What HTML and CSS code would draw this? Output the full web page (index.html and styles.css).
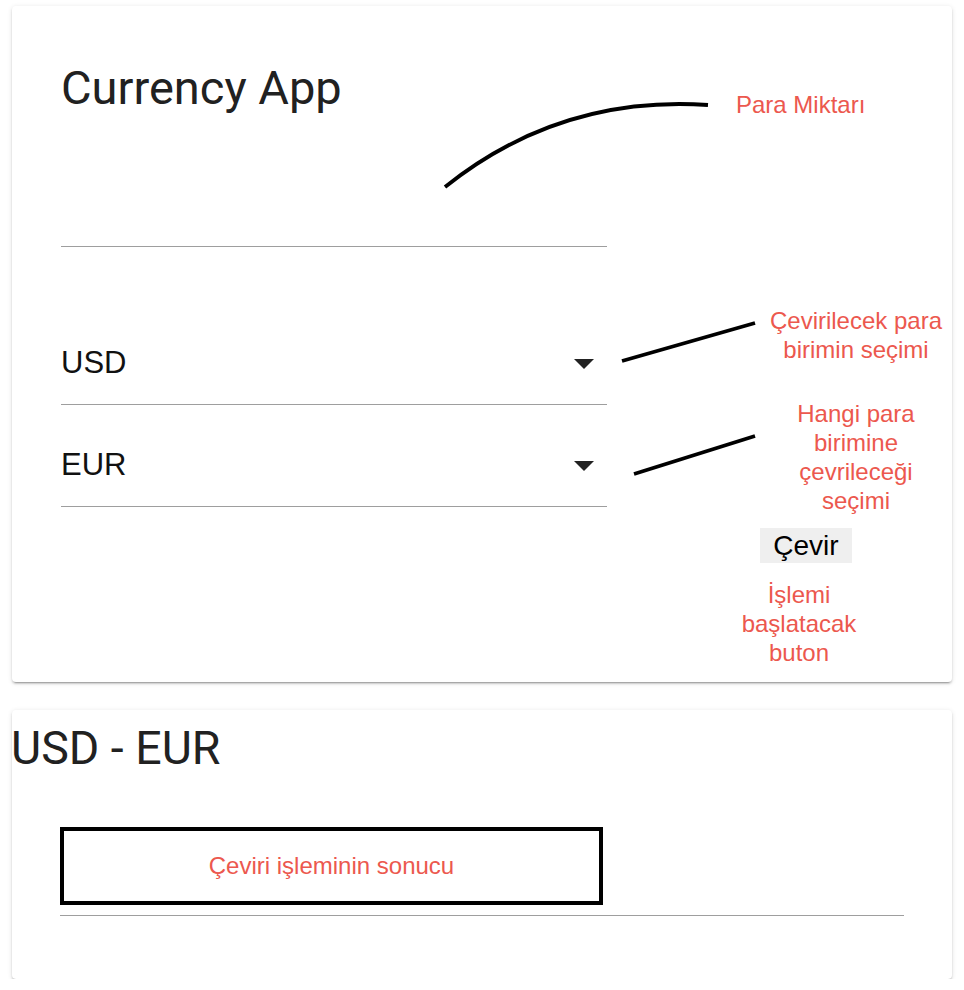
FILE: index.html
```html
<!DOCTYPE html>
<html lang="tr">
<head>
<meta charset="utf-8">
<title>Currency App</title>
<link rel="stylesheet" href="styles.css">
</head>
<body>
<main class="page">
  <section class="card card-form">
    <div class="form-col">
      <h1 class="app-title">Currency App</h1>
      <div class="field field-amount"></div>
      <div class="field field-select field-from">
        <span class="select-value">USD</span>
        <svg class="select-arrow" width="20" height="10" viewBox="0 0 20 10"><polygon points="0,0 20,0 10,10"/></svg>
      </div>
      <div class="field field-select field-to">
        <span class="select-value">EUR</span>
        <svg class="select-arrow" width="20" height="10" viewBox="0 0 20 10"><polygon points="0,0 20,0 10,10"/></svg>
      </div>
    </div>
    <div class="notes-col">
      <p class="note note-amount">Para Miktarı</p>
      <p class="note note-from">Çevirilecek para<br>birimin seçimi</p>
      <p class="note note-to">Hangi para<br>birimine<br>çevrileceği<br>seçimi</p>
      <button class="convert-btn" type="button">Çevir</button>
      <p class="note note-btn">İşlemi<br>başlatacak<br>buton</p>
    </div>
    <svg class="pointers" width="940" height="676" viewBox="0 0 940 676">
      <path d="M433 181 Q548 89 696 99" />
      <path d="M610 355 L743 317" />
      <path d="M622 468 L743 430" />
    </svg>
  </section>

  <section class="card card-result">
    <h2 class="pair-title">USD - EUR</h2>
    <div class="result-field">
      <div class="result-box">Çeviri işleminin sonucu</div>
    </div>
  </section>
</main>
</body>
</html>
```

FILE: styles.css
```css
* {
  box-sizing: border-box;
}

html, body {
  margin: 0;
  padding: 0;
  background: #ffffff;
}

body {
  font-family: "Liberation Sans", Arial, sans-serif;
  color: #000;
}

.page {
  display: flex;
  flex-direction: column;
  gap: 28px;
  padding: 6px 12px 0;
}

.card {
  position: relative;
  background: #fff;
  border-radius: 4px;
  box-shadow: 0 3px 1px -2px rgba(0,0,0,0.2),
              0 2px 2px 0 rgba(0,0,0,0.14),
              0 1px 5px 0 rgba(0,0,0,0.12);
}

/* ---------- form card ---------- */
.card-form {
  display: grid;
  grid-template-columns: 546px 192px;
  column-gap: 153px;
  align-items: start;
  padding: 54px 0 15.5px 49px;
}

.form-col {
  display: flex;
  flex-direction: column;
}

.app-title {
  margin: 0;
  font-family: Roboto, "Liberation Sans", sans-serif;
  font-weight: 400;
  font-size: 47px;
  line-height: 56px;
  color: #212121;
}

.field {
  border-bottom: 1px solid #9e9e9e;
}

.field-amount {
  height: 131px;
}

.field-select {
  display: flex;
  align-items: flex-end;
  justify-content: space-between;
  padding-bottom: 23px;
}

.field-from {
  height: 158px;
}

.field-to {
  height: 102px;
}

.select-value {
  font-size: 31px;
  line-height: 36px;
  color: #111;
}

.select-arrow {
  display: block;
  fill: #222;
  margin: 0 13px 12px 0;
}

.notes-col {
  display: flex;
  flex-direction: column;
  align-items: flex-start;
}

.note {
  margin: 0;
  font-size: 24px;
  line-height: 29px;
  color: #ec584e;
}

.note-amount {
  margin-top: 30px;
  margin-left: -24px;
  white-space: nowrap;
}

.note-from {
  align-self: stretch;
  text-align: center;
  margin-top: 187px;
  margin-right: -10px;
  margin-left: -10px;
}

.note-to {
  align-self: stretch;
  text-align: center;
  margin-top: 35px;
}

.convert-btn {
  margin-top: 13px;
  width: 92px;
  height: 35px;
  padding: 0;
  border: 0;
  border-radius: 0;
  background: #efefef;
  font-family: "Liberation Sans", Arial, sans-serif;
  font-size: 28px;
  line-height: 35px;
  color: #000;
  text-align: center;
}

.note-btn {
  margin-top: 16.5px;
  margin-left: -21px;
  width: 120px;
  text-align: center;
}

.pointers {
  position: absolute;
  left: 0;
  top: 0;
  pointer-events: none;
  fill: none;
  stroke: #000;
  stroke-width: 3.8;
}

/* ---------- result card ---------- */
.card-result {
  padding: 10px 0 63px;
}

.pair-title {
  margin: 0 0 0 -1px;
  font-family: Roboto, "Liberation Sans", sans-serif;
  font-weight: 400;
  font-size: 46.5px;
  line-height: 56px;
  color: #212121;
}

.result-field {
  margin: 51px 48px 0;
  padding-bottom: 10px;
  border-bottom: 1px solid #9e9e9e;
}

.result-box {
  display: flex;
  align-items: center;
  justify-content: center;
  width: 543px;
  height: 78px;
  border: 4px solid #000;
  font-size: 24px;
  color: #ec584e;
}
```
